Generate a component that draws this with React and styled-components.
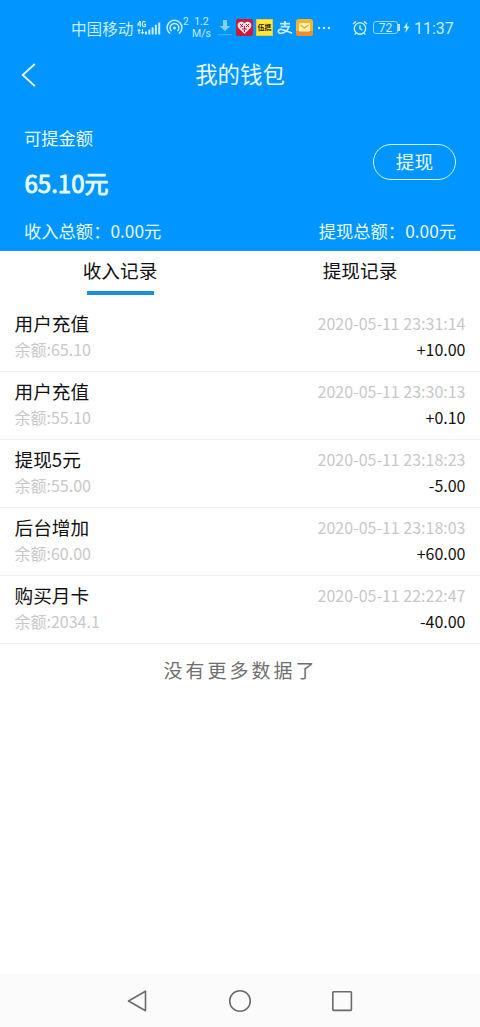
import React from 'react';
import styled, { createGlobalStyle } from 'styled-components';

const GlobalStyle = createGlobalStyle`
   * {
      box-sizing: border-box;
   }

   body {
      margin: 0;
      background: #fff;
      font-family: 'Noto Sans CJK SC', sans-serif;
   }
`;

const Page = styled.div`
   display: flex;
   flex-direction: column;
   width: 480px;
   height: 1027px;
   overflow: hidden;
   background: #fff;
   color: #111;
`;

const Header = styled.header`
   height: 251px;
   background: #0095ff;
   border-bottom: 1px solid #2b93e0;
   color: #e6faff;
`;

const StatusBar = styled.div`
   display: flex;
   align-items: center;
   height: 55px;
   padding-left: 71px;
   color: #c8eeff;
   white-space: nowrap;
`;

const StatusItem = styled.div`
   display: flex;
   flex: none;
   align-items: center;
   width: ${({ width }) => width}px;
   margin-right: ${({ gap }) => gap || 0}px;
`;

const Carrier = styled.span`
   font-size: 15.6px;
   line-height: 24px;
`;

const Speed = styled.span`
   width: 100%;
   padding-top: 1px;
   font-family: Roboto, sans-serif;
   font-size: 10.5px;
   line-height: 12px;
   text-align: center;
`;

const Clock = styled.span`
   padding-top: 2px;
   font-family: Roboto, sans-serif;
   font-size: 16px;
   line-height: 24px;
`;

const Battery = styled.span`
   display: flex;
   align-items: center;
   justify-content: center;
   width: 25px;
   height: 13px;
   border: 1px solid #8fd6ff;
   border-radius: 3px;
   font-family: Roboto, sans-serif;
   font-size: 12px;
   line-height: 12px;
`;

const BatteryTip = styled.span`
   width: 2px;
   height: 7px;
   background: #bfe9ff;
`;

const NavBar = styled.div`
   display: grid;
   grid-template-columns: 56px 1fr 56px;
   align-items: center;
   height: 39px;
`;

const BackButton = styled.button`
   display: flex;
   padding: 1px 0 0 20px;
   border: 0;
   background: none;
   color: inherit;
`;

const Title = styled.h1`
   margin: 0 0 3px;
   font-size: 22.4px;
   font-weight: normal;
   line-height: 34px;
   text-align: center;
`;

const Balance = styled.div`
   display: flex;
   align-items: center;
   justify-content: space-between;
   height: 120px;
   padding: 18px 24px 0;
`;

const Label = styled.div`
   font-size: 17.3px;
   line-height: 26px;
`;

const Amount = styled.div`
   margin: 14px 0 1px;
   padding-left: 0.5px;
   font-size: 24px;
   line-height: 36px;
   -webkit-text-stroke: 0.9px currentColor;
`;

const WithdrawButton = styled.button`
   width: 83px;
   height: 36px;
   margin-bottom: 2px;
   padding: 0 0 2px;
   border: 1.5px solid #d5f6ff;
   border-radius: 18px;
   background: none;
   color: inherit;
   font-family: inherit;
   font-size: 18.67px;
   line-height: 30px;
`;

const Totals = styled.div`
   display: flex;
   justify-content: space-between;
   padding: 4px 24px 0;
`;

const Tabs = styled.div`
   display: grid;
   grid-template-columns: 1fr 1fr;
   height: 53px;
`;

const Tab = styled.div`
   display: flex;
   flex-direction: column;
   align-items: center;
   padding-top: 5px;
   font-size: 18.67px;
   line-height: 28px;

   &::after {
      content: '';
      width: 67px;
      height: 4px;
      margin-top: 6.5px;
      background: ${({ $active }) => ($active ? '#1d8ede' : 'transparent')};
   }
`;

const Record = styled.div`
   height: 68px;
   padding: 5px 14.5px 0;
   border-bottom: 1px solid #f1f1f1;
`;

const RecordLine = styled.div`
   display: flex;
   justify-content: space-between;
   line-height: ${({ $height }) => $height}px;
`;

const Name = styled.span`
   font-size: 18.67px;
`;

const Muted = styled.span`
   color: #c8c8c8;
   font-size: 16px;
`;

const Change = styled.span`
   font-size: 16px;
`;

const Footer = styled.div`
   flex: 1;
   padding: 12px 0 0 1px;
   color: #6f6f6f;
   font-size: 19px;
   letter-spacing: 3px;
   line-height: 28px;
   text-align: center;
`;

const SystemNav = styled.nav`
   display: flex;
   align-items: center;
   justify-content: space-between;
   height: 53px;
   padding: 0 126px 0 125px;
   background: #fbfbfb;
`;

const SignalIcon = () => (
   <svg width="24" height="16" viewBox="0 0 24 16" fill="currentColor">
      <path
         d="M3 1 L.7 5 H4 M3.2 1 V7 M8.5 2 Q5.3 .3 5.3 4 Q5.3 7.3 8.4 6.3 V4.3 H7"
         fill="none"
         stroke="currentColor"
         strokeWidth="1.2"
      />
      <path d="M0 11 L2 8.5 L4 11 H2.6 V14 H1.4 V11 Z M3.5 12 H5 V9 H6 V12 H7.5 L5.5 14.5 Z" />
      <rect x="8" y="11.5" width="2" height="3" />
      <rect x="11.3" y="9.5" width="2" height="5" />
      <rect x="14.6" y="7.3" width="2" height="7.2" />
      <rect x="17.9" y="4.7" width="2" height="9.8" />
      <rect x="21.2" y="2.5" width="2" height="12" />
   </svg>
);

const HotspotIcon = () => (
   <svg width="17" height="18" viewBox="0 0 17 18" fill="none" stroke="currentColor" strokeWidth="1.5">
      <path d="M4.2 14.7 A7.4 7.4 0 1 1 12.8 14.7" />
      <path d="M5.6 12.1 A4.4 4.4 0 1 1 11.4 12.1" />
      <circle cx="8.5" cy="9" r="1.5" fill="currentColor" stroke="none" />
   </svg>
);

const Superscript = styled.sup`
   align-self: flex-start;
   margin-top: -2px;
   font-family: Roboto, sans-serif;
   font-size: 10px;
   line-height: 10px;
`;

const DownloadIcon = () => (
   <svg width="16" height="18" viewBox="0 0 16 18">
      <path d="M6 1 H10 V7 H13.5 L8 12 L2.5 7 H6 Z" fill="#87cff7" />
      <path d="M1 15.7 H15" stroke="#4ab9ff" strokeWidth="1" />
   </svg>
);

const HeartIcon = () => (
   <svg width="17" height="17" viewBox="0 0 17 17">
      <rect width="17" height="17" rx="2" fill="#cf1838" />
      <path
         d="M8.5 15 L2.3 8.7 C-.3 4 5 .7 8.5 4.2 C12 .7 17.3 4 14.7 8.7 Z"
         fill="#ffe5e9"
      />
      <path
         d="M4 5 L7 8 M7 4.7 L4.5 8.5 M10 5 L13 8 M13 5 L10 8 M6 10 H11 M8.5 7 V13"
         stroke="#cf1838"
         strokeWidth="1"
      />
   </svg>
);

const YellowText = styled.span`
   width: 17px;
   height: 17px;
   border: 1px solid #f3c640;
   background: #ffe933;
   color: #29220b;
   font-size: 7px;
   font-weight: bold;
   line-height: 14px;
   text-align: center;
`;

const AlipayIcon = () => (
   <svg width="16" height="16" viewBox="0 0 16 16" fill="none" stroke="currentColor" strokeWidth="1.7">
      <path d="M3 3.6 H13 M8 1 V6.6 M3.7 6.6 H12 C10.6 10.8 7.5 13.3 3.7 13.3 C.7 13.3 .3 9.3 3.8 9.3 C7.3 9.3 10.3 12 15.2 13.2" />
   </svg>
);

const MailIcon = () => (
   <svg width="17" height="17" viewBox="0 0 17 17">
      <rect width="17" height="17" rx="3" fill="#f5b52e" />
      <path d="M0 12 H17 V14 A3 3 0 0 1 14 17 H3 A3 3 0 0 1 0 14 Z" fill="#ef8c2b" />
      <rect x="3" y="4" width="11" height="8.5" rx="1" fill="#fff2b0" />
      <path d="M4.5 6 L8.5 9 L12.5 6" fill="none" stroke="#e9a11f" strokeWidth="1.3" />
   </svg>
);

const DotsIcon = () => (
   <svg width="14" height="4" viewBox="0 0 14 4" fill="currentColor">
      <circle cx="2" cy="2" r="1.2" />
      <circle cx="7" cy="2" r="1.2" />
      <circle cx="12" cy="2" r="1.2" />
   </svg>
);

const AlarmIcon = () => (
   <svg width="16" height="16" viewBox="0 0 16 16" fill="none" stroke="currentColor" strokeWidth="1.4">
      <circle cx="8" cy="8.5" r="5.7" />
      <path d="M8 5.2 V8.7 L10.4 10.2 M1 4 L4 1.3 M15 4 L12 1.3 M4.2 12.7 L2.7 14.7 M11.8 12.7 L13.3 14.7" />
   </svg>
);

const BoltIcon = () => (
   <svg width="7" height="11" viewBox="0 0 7 11" fill="currentColor">
      <path d="M4.4 0 L.5 6 H3 L2.3 11 L6.5 4.6 H4 Z" />
   </svg>
);

const BackIcon = () => (
   <svg width="16" height="24" viewBox="0 0 16 24" fill="none" stroke="currentColor" strokeWidth="1.8">
      <path d="M14.8 1 L2.7 12 L14.8 23" />
   </svg>
);

const records = [
   { name: '用户充值', time: '2020-05-11 23:31:14', balance: '65.10', change: '+10.00' },
   { name: '用户充值', time: '2020-05-11 23:30:13', balance: '55.10', change: '+0.10' },
   { name: '提现5元', time: '2020-05-11 23:18:23', balance: '55.00', change: '-5.00' },
   { name: '后台增加', time: '2020-05-11 23:18:03', balance: '60.00', change: '+60.00' },
   { name: '购买月卡', time: '2020-05-11 22:22:47', balance: '2034.1', change: '-40.00' },
];

const Status = () => (
   <StatusBar>
      <StatusItem width={62} gap={4}>
         <Carrier>中国移动</Carrier>
      </StatusItem>
      <StatusItem width={24} gap={5}>
         <SignalIcon />
      </StatusItem>
      <StatusItem width={23} gap={2}>
         <HotspotIcon />
         <Superscript>2</Superscript>
      </StatusItem>
      <StatusItem width={21} gap={5}>
         <Speed>
            1.2
            <br />
            M/s
         </Speed>
      </StatusItem>
      <StatusItem width={16} gap={3}>
         <DownloadIcon />
      </StatusItem>
      <StatusItem width={17} gap={3}>
         <HeartIcon />
      </StatusItem>
      <StatusItem width={17} gap={4}>
         <YellowText>伍携</YellowText>
      </StatusItem>
      <StatusItem width={16} gap={3}>
         <AlipayIcon />
      </StatusItem>
      <StatusItem width={17} gap={4}>
         <MailIcon />
      </StatusItem>
      <StatusItem width={14} gap={21}>
         <DotsIcon />
      </StatusItem>
      <StatusItem width={16} gap={5}>
         <AlarmIcon />
      </StatusItem>
      <StatusItem width={28} gap={2}>
         <Battery>72</Battery>
         <BatteryTip />
      </StatusItem>
      <StatusItem width={8} gap={3}>
         <BoltIcon />
      </StatusItem>
      <StatusItem width={40}>
         <Clock>11:37</Clock>
      </StatusItem>
   </StatusBar>
);

const App = () => (
   <Page>
      <GlobalStyle />
      <Header>
         <Status />
         <NavBar>
            <BackButton aria-label="返回">
               <BackIcon />
            </BackButton>
            <Title>我的钱包</Title>
         </NavBar>
         <Balance>
            <div>
               <Label>可提金额</Label>
               <Amount>65.10元</Amount>
            </div>
            <WithdrawButton>提现</WithdrawButton>
         </Balance>
         <Totals>
            <Label>收入总额：0.00元</Label>
            <Label>提现总额：0.00元</Label>
         </Totals>
      </Header>
      <Tabs>
         <Tab $active>收入记录</Tab>
         <Tab>提现记录</Tab>
      </Tabs>
      {records.map(({ name, time, balance, change }) => (
         <Record key={time}>
            <RecordLine $height={28}>
               <Name>{name}</Name>
               <Muted>{time}</Muted>
            </RecordLine>
            <RecordLine $height={24}>
               <Muted>余额:{balance}</Muted>
               <Change>{change}</Change>
            </RecordLine>
         </Record>
      ))}
      <Footer>没有更多数据了</Footer>
      <SystemNav>
         <svg width="24" height="24" viewBox="0 0 24 24" fill="none" stroke="#6a6a6a" strokeWidth="1.6">
            <path d="M20.5 2.2 V21.8 L3.5 12 Z" strokeLinejoin="round" />
         </svg>
         <svg width="24" height="24" viewBox="0 0 24 24" fill="none" stroke="#6a6a6a" strokeWidth="1.6">
            <circle cx="12" cy="12" r="10.3" />
         </svg>
         <svg width="24" height="24" viewBox="0 0 24 24" fill="none" stroke="#6a6a6a" strokeWidth="1.6">
            <rect x="2.8" y="2.8" width="18.6" height="18.6" rx="0.8" />
         </svg>
      </SystemNav>
   </Page>
);

export default App;
